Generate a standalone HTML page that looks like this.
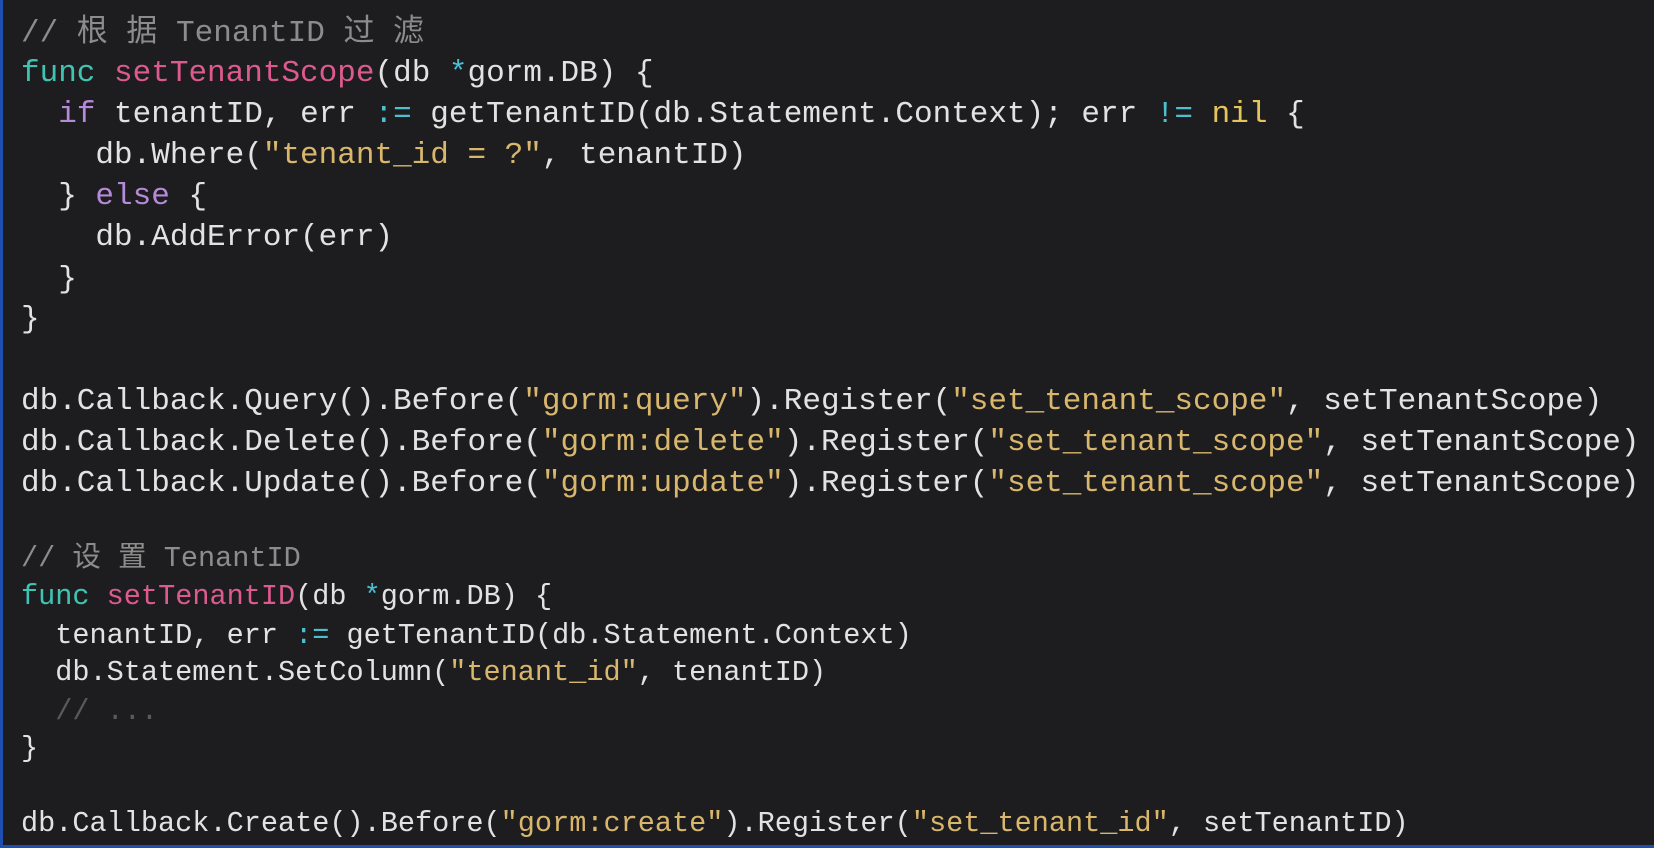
<!DOCTYPE html>
<html><head><meta charset="utf-8"><style>
html,body{margin:0;padding:0;}
body{width:1654px;height:848px;background:#1d1d1f;position:relative;overflow:hidden;font-family:"Liberation Mono","Noto Sans CJK SC",monospace;color:#e2e2e2;}
.l{position:absolute;left:21px;white-space:pre;line-height:40px;height:40px;}
.a{font-size:31px;}
.b{font-size:28.55px;}
.c{color:#8c8c8c}.d{color:#5a5a5a}
.k{color:#3fc4b4}.f{color:#dc5a8f}.p{color:#b58ad8}.s{color:#d8b66c}.o{color:#4cc0d0}.n{color:#e6c45c}
#lb{position:absolute;left:0;top:0;width:3px;height:848px;background:#1e4fb0}
#bb{position:absolute;left:0;bottom:0;width:1654px;height:3px;background:#1e4fb0}
</style></head><body>
<div id="lb"></div><div id="bb"></div>
<div class="l a c" style="top:14px">// 根 据 TenantID 过 滤</div>
<div class="l a" style="top:54px"><span class="k">func</span> <span class="f">setTenantScope</span>(db <span class="o">*</span>gorm.DB) {</div>
<div class="l a" style="top:95px">  <span class="p">if</span> tenantID, err <span class="o">:=</span> getTenantID(db.Statement.Context); err <span class="o">!=</span> <span class="n">nil</span> {</div>
<div class="l a" style="top:136px">    db.Where(<span class="s">"tenant_id = ?"</span>, tenantID)</div>
<div class="l a" style="top:177px">  } <span class="p">else</span> {</div>
<div class="l a" style="top:218px">    db.AddError(err)</div>
<div class="l a" style="top:260px">  }</div>
<div class="l a" style="top:300px">}</div>
<div class="l a" style="top:382px">db.Callback.Query().Before(<span class="s">"gorm:query"</span>).Register(<span class="s">"set_tenant_scope"</span>, setTenantScope)</div>
<div class="l a" style="top:423px">db.Callback.Delete().Before(<span class="s">"gorm:delete"</span>).Register(<span class="s">"set_tenant_scope"</span>, setTenantScope)</div>
<div class="l a" style="top:464px">db.Callback.Update().Before(<span class="s">"gorm:update"</span>).Register(<span class="s">"set_tenant_scope"</span>, setTenantScope)</div>
<div class="l b c" style="top:539px">// 设 置 TenantID</div>
<div class="l b" style="top:577px"><span class="k">func</span> <span class="f">setTenantID</span>(db <span class="o">*</span>gorm.DB) {</div>
<div class="l b" style="top:616px">  tenantID, err <span class="o">:=</span> getTenantID(db.Statement.Context)</div>
<div class="l b" style="top:653px">  db.Statement.SetColumn(<span class="s">"tenant_id"</span>, tenantID)</div>
<div class="l b d" style="top:692px">  // ...</div>
<div class="l b" style="top:729px">}</div>
<div class="l b" style="top:804px">db.Callback.Create().Before(<span class="s">"gorm:create"</span>).Register(<span class="s">"set_tenant_id"</span>, setTenantID)</div>
</body></html>
